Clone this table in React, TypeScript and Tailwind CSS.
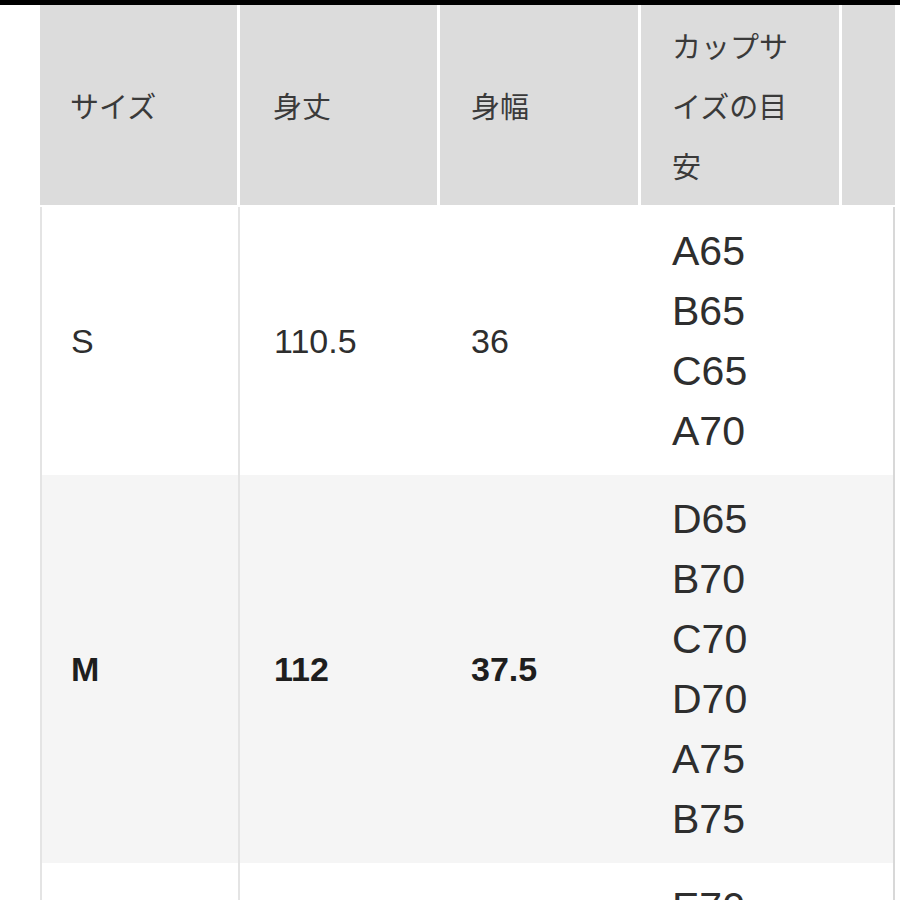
import React from "react";

type Row = {
  size: string;
  len: string;
  w: string;
  cups: string[];
  bold: boolean;
  bg: string;
};

const rows: Row[] = [
  { size: "S", len: "110.5", w: "36", cups: ["A65", "B65", "C65", "A70"], bold: false, bg: "bg-white" },
  { size: "M", len: "112", w: "37.5", cups: ["D65", "B70", "C70", "D70", "A75", "B75"], bold: true, bg: "bg-[#f5f5f5]" },
  { size: "L", len: "113.5", w: "39", cups: ["E70", "A80", "B80", "C80"], bold: false, bg: "bg-white" },
];

const jp = { fontFamily: '"Noto Sans CJK JP", "Noto Sans", sans-serif' };
const lat = { fontFamily: '"Liberation Sans", Arial, sans-serif' };

export default function App() {
  return (
    <div className="w-[900px] h-[900px] overflow-hidden bg-white">
      <div className="h-[5px] bg-black" />
      <div className="ml-[40px] w-[855px]">
        {/* header */}
        <div className="flex gap-[3px] h-[200px] text-[#3a3a3a] text-[29px] leading-[60px]" style={jp}>
          <div className="w-[197px] bg-[#dcdcdc] flex items-center pl-[30px]">サイズ</div>
          <div className="w-[197px] bg-[#dcdcdc] flex items-center pl-[33px]">身丈</div>
          <div className="w-[198px] bg-[#dcdcdc] flex items-center pl-[31px]">身幅</div>
          <div className="w-[198px] bg-[#dcdcdc] flex items-center pl-[31px] pr-[36px]">
            <span>カップサイズの目安</span>
          </div>
          <div className="flex-1 bg-[#dcdcdc]" />
        </div>
        <div className="h-[2px]" />
        {/* body */}
        {rows.map((r) => (
          <div key={r.size} className={`flex ${r.bg} text-[#2e2e2e]`} style={lat}>
            <div
              className={`w-[200px] border-l-2 border-r-2 border-[#e4e4e4] flex items-center pl-[29px] text-[34px] ${
                r.bold ? "font-bold text-[#1e1e1e]" : ""
              }`}
            >
              {r.size}
            </div>
            <div
              className={`w-[200px] flex items-center pl-[34px] text-[34px] ${
                r.bold ? "font-bold text-[#1e1e1e]" : ""
              }`}
            >
              {r.len}
            </div>
            <div
              className={`w-[201px] flex items-center pl-[31px] text-[34px] ${
                r.bold ? "font-bold text-[#1e1e1e]" : ""
              }`}
            >
              {r.w}
            </div>
            <div className="w-[201px] flex flex-col py-[14px] pl-[31px] text-[41px] leading-[60px]">
              {r.cups.map((c) => (
                <div key={c}>{c}</div>
              ))}
            </div>
            <div className="flex-1 border-r-2 border-[#d8d8d8]" />
          </div>
        ))}
      </div>
    </div>
  );
}
